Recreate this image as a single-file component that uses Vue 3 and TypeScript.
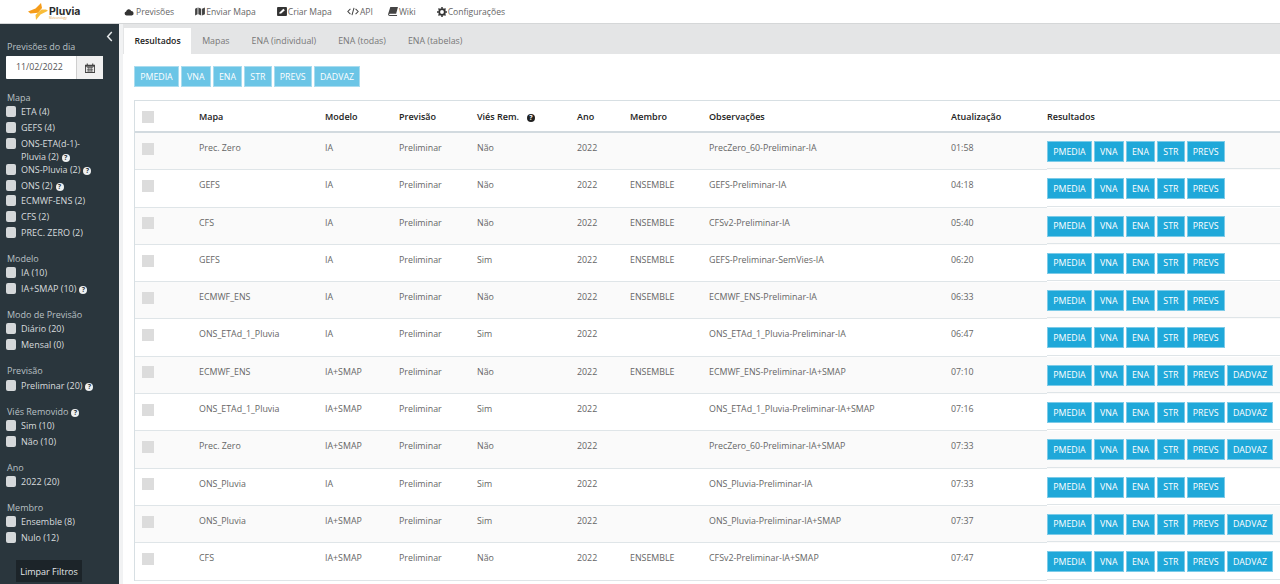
<script setup lang="ts">
interface Filter {
  label: string;
  help?: boolean;
}
interface Group {
  title: string;
  help?: boolean;
  filters: Filter[];
}
interface Row {
  mapa: string;
  modelo: string;
  previsao: string;
  vies: string;
  membro: string;
  obs: string;
  hora: string;
  dadvaz: boolean;
}

const menu = [
  { label: "Previsões", icon: "cloud", wide: true },
  { label: "Enviar Mapa", icon: "map", wide: true },
  { label: "Criar Mapa", icon: "edit", wide: false },
  { label: "API", icon: "code", wide: false },
  { label: "Wiki", icon: "book", wide: true },
  { label: "Configurações", icon: "cog", wide: false },
];

const tabs = ["Resultados", "Mapas", "ENA (individual)", "ENA (todas)", "ENA (tabelas)"];

const groups: Group[] = [
  {
    title: "Mapa",
    filters: [
      { label: "ETA (4)" },
      { label: "GEFS (4)" },
      { label: "ONS-ETA(d-1)-Pluvia (2)", help: true },
      { label: "ONS-Pluvia (2)", help: true },
      { label: "ONS (2)", help: true },
      { label: "ECMWF-ENS (2)" },
      { label: "CFS (2)" },
      { label: "PREC. ZERO (2)" },
    ],
  },
  { title: "Modelo", filters: [{ label: "IA (10)" }, { label: "IA+SMAP (10)", help: true }] },
  { title: "Modo de Previsão", filters: [{ label: "Diário (20)" }, { label: "Mensal (0)" }] },
  { title: "Previsão", filters: [{ label: "Preliminar (20)", help: true }] },
  { title: "Viés Removido", help: true, filters: [{ label: "Sim (10)" }, { label: "Não (10)" }] },
  { title: "Ano", filters: [{ label: "2022 (20)" }] },
  { title: "Membro", filters: [{ label: "Ensemble (8)" }, { label: "Nulo (12)" }] },
];

const columns = ["Mapa", "Modelo", "Previsão", "Viés Rem.", "Ano", "Membro", "Observações", "Atualização", "Resultados"];

const rows: Row[] = [
  { mapa: "Prec. Zero", modelo: "IA", previsao: "Preliminar", vies: "Não", membro: "", obs: "PrecZero_60-Preliminar-IA", hora: "01:58", dadvaz: false },
  { mapa: "GEFS", modelo: "IA", previsao: "Preliminar", vies: "Não", membro: "ENSEMBLE", obs: "GEFS-Preliminar-IA", hora: "04:18", dadvaz: false },
  { mapa: "CFS", modelo: "IA", previsao: "Preliminar", vies: "Não", membro: "ENSEMBLE", obs: "CFSv2-Preliminar-IA", hora: "05:40", dadvaz: false },
  { mapa: "GEFS", modelo: "IA", previsao: "Preliminar", vies: "Sim", membro: "ENSEMBLE", obs: "GEFS-Preliminar-SemVies-IA", hora: "06:20", dadvaz: false },
  { mapa: "ECMWF_ENS", modelo: "IA", previsao: "Preliminar", vies: "Não", membro: "ENSEMBLE", obs: "ECMWF_ENS-Preliminar-IA", hora: "06:33", dadvaz: false },
  { mapa: "ONS_ETAd_1_Pluvia", modelo: "IA", previsao: "Preliminar", vies: "Sim", membro: "", obs: "ONS_ETAd_1_Pluvia-Preliminar-IA", hora: "06:47", dadvaz: false },
  { mapa: "ECMWF_ENS", modelo: "IA+SMAP", previsao: "Preliminar", vies: "Não", membro: "ENSEMBLE", obs: "ECMWF_ENS-Preliminar-IA+SMAP", hora: "07:10", dadvaz: true },
  { mapa: "ONS_ETAd_1_Pluvia", modelo: "IA+SMAP", previsao: "Preliminar", vies: "Sim", membro: "", obs: "ONS_ETAd_1_Pluvia-Preliminar-IA+SMAP", hora: "07:16", dadvaz: true },
  { mapa: "Prec. Zero", modelo: "IA+SMAP", previsao: "Preliminar", vies: "Não", membro: "", obs: "PrecZero_60-Preliminar-IA+SMAP", hora: "07:33", dadvaz: true },
  { mapa: "ONS_Pluvia", modelo: "IA", previsao: "Preliminar", vies: "Sim", membro: "", obs: "ONS_Pluvia-Preliminar-IA", hora: "07:33", dadvaz: false },
  { mapa: "ONS_Pluvia", modelo: "IA+SMAP", previsao: "Preliminar", vies: "Sim", membro: "", obs: "ONS_Pluvia-Preliminar-IA+SMAP", hora: "07:37", dadvaz: true },
  { mapa: "CFS", modelo: "IA+SMAP", previsao: "Preliminar", vies: "Não", membro: "ENSEMBLE", obs: "CFSv2-Preliminar-IA+SMAP", hora: "07:47", dadvaz: true },
];

const baseButtons = ["PMEDIA", "VNA", "ENA", "STR", "PREVS"];
const allButtons = [...baseButtons, "DADVAZ"];
</script>

<template>
  <div class="page">
    <header class="topbar">
      <div class="logo">
        <svg class="logo-mark" viewBox="0 0 20 17" width="20" height="17">
          <path d="M0 8.5 L7.5 5.5 L13 0 L14 5 L10 9.8 L2.5 10.5 Z" fill="#f59c1a" />
          <path d="M20 7.8 L12.5 11.5 L8 17 L7.5 12 L10.5 9 L13.5 6.6 L18 6.6 Z" fill="#f8bd3a" />
        </svg>
        <div class="logo-text">
          <span class="logo-name">Pluvia</span>
          <span class="logo-sub">Meteorology</span>
        </div>
      </div>
      <nav class="menu">
        <a v-for="item in menu" :key="item.label" class="menu-item" :class="{ wide: item.wide }">
          <svg v-if="item.icon === 'cloud'" class="cloud" viewBox="0 0 12 10" width="10" height="8">
            <path d="M3 9.5 A2.6 2.6 0 0 1 2.4 4.4 A3.4 3.4 0 0 1 8.8 3.6 A3 3 0 0 1 9.5 9.5 Z" fill="#333" />
          </svg>
          <svg v-else-if="item.icon === 'map'" viewBox="0 0 12 11" width="10" height="9">
            <path d="M0 2 L3 .5 V9 L0 10.5 Z M4 .5 L7.5 2 V10.5 L4 9 Z M8.5 2 L12 .5 V9 L8.5 10.5 Z" fill="#444" />
          </svg>
          <svg v-else-if="item.icon === 'edit'" viewBox="0 0 11 10" width="10" height="9">
            <path d="M1 0 H10 A1 1 0 0 1 11 1 V9 A1 1 0 0 1 10 10 H1 A1 1 0 0 1 0 9 V1 A1 1 0 0 1 1 0 Z" fill="#333" />
            <path d="M2.5 7.6 L3 5.8 L7 1.9 L8.7 3.5 L4.6 7.3 Z" fill="#fff" />
          </svg>
          <svg v-else-if="item.icon === 'code'" viewBox="0 0 14 10" width="12" height="9">
            <path d="M4 2 L1 5 L4 8 M10 2 L13 5 L10 8 M8.2 .8 L5.8 9.2" fill="none" stroke="#444" stroke-width="1.2" />
          </svg>
          <svg v-else-if="item.icon === 'book'" viewBox="0 0 11 10" width="10" height="9">
            <path d="M2.5 0 H11 L9 7.5 H2 Q1 7.5 1.2 8.4 Q1.4 9 2.2 9 H10 V10 H2 Q0 10 0 8 Z" fill="#444" />
          </svg>
          <svg v-else viewBox="0 0 12 12" width="10" height="10">
            <circle cx="6" cy="6" r="3.4" fill="none" stroke="#333" stroke-width="2.2" />
            <path d="M6 0 V2 M6 10 V12 M0 6 H2 M10 6 H12 M1.8 1.8 L3.2 3.2 M8.8 8.8 L10.2 10.2 M1.8 10.2 L3.2 8.8 M8.8 3.2 L10.2 1.8" stroke="#333" stroke-width="1.8" />
          </svg>
          <span>{{ item.label }}</span>
        </a>
      </nav>
    </header>

    <div class="body">
      <aside class="sidebar">
        <svg class="collapse" viewBox="0 0 7 12" width="7" height="11">
          <path d="M6 1 L1.5 6 L6 11" fill="none" stroke="#e6e9ea" stroke-width="1.6" />
        </svg>
        <h4 class="date-title">Previsões do dia</h4>
        <div class="date">
          <span class="date-value">11/02/2022</span>
          <span class="date-btn">
            <svg viewBox="0 0 11 11" width="10" height="10">
              <path d="M0 2 H11 V11 H0 Z M1 4 V10 H10 V4 Z" fill="#444" fill-rule="evenodd" />
              <path d="M2.5 .5 V2.5 M8.5 .5 V2.5" stroke="#444" stroke-width="1.2" />
              <path d="M2 5 H9 M2 7 H9 M2 8.8 H9 M3.7 4.5 V9.5 M5.5 4.5 V9.5 M7.3 4.5 V9.5" stroke="#444" stroke-width=".7" />
            </svg>
          </span>
        </div>
        <section v-for="group in groups" :key="group.title" class="group">
          <h4 class="group-title">{{ group.title }}<span v-if="group.help" class="help">?</span></h4>
          <label v-for="filter in group.filters" :key="filter.label" class="filter">
            <span class="check"></span>
            <span class="filter-label">{{ filter.label }}<span v-if="filter.help" class="help">?</span></span>
          </label>
        </section>
        <button class="clear">Limpar Filtros</button>
      </aside>

      <main class="content">
        <div class="tabs">
          <a v-for="(tab, i) in tabs" :key="tab" class="tab" :class="{ active: i === 0 }">{{ tab }}</a>
        </div>
        <div class="panel">
          <div class="bulk">
            <button v-for="b in allButtons" :key="b" class="btn">{{ b }}</button>
          </div>
          <table class="results">
            <colgroup>
              <col style="width: 64px" />
              <col style="width: 126px" />
              <col style="width: 74px" />
              <col style="width: 78px" />
              <col style="width: 100px" />
              <col style="width: 53px" />
              <col style="width: 79px" />
              <col style="width: 242px" />
              <col style="width: 96px" />
              <col style="width: 240px" />
            </colgroup>
            <thead>
              <tr>
                <th><span class="box"></span></th>
                <th v-for="c in columns" :key="c">
                  {{ c }}<span v-if="c === 'Viés Rem.'" class="help dark">?</span>
                </th>
              </tr>
            </thead>
            <tbody>
              <tr v-for="(r, i) in rows" :key="i">
                <td><span class="box"></span></td>
                <td>{{ r.mapa }}</td>
                <td>{{ r.modelo }}</td>
                <td>{{ r.previsao }}</td>
                <td>{{ r.vies }}</td>
                <td>2022</td>
                <td>{{ r.membro }}</td>
                <td>{{ r.obs }}</td>
                <td>{{ r.hora }}</td>
                <td class="actions">
                  <button v-for="b in r.dadvaz ? allButtons : baseButtons" :key="b" class="btn solid">{{ b }}</button>
                </td>
              </tr>
            </tbody>
          </table>
        </div>
      </main>
    </div>
  </div>
</template>

<style>
html,
body {
  margin: 0;
  height: 100%;
  overflow: hidden;
  background: #fff;
}
</style>

<style scoped>
.page {
  display: flex;
  flex-direction: column;
  width: 1280px;
  height: 584px;
  overflow: hidden;
  font-family: "Open Sans", "Noto Sans", sans-serif;
  font-size: 9px;
  color: #555;
}

.topbar {
  display: flex;
  flex: none;
  align-items: center;
  height: 23px;
  background: #fff;
  border-bottom: 1px solid #d5d7d8;
}
.logo {
  display: flex;
  align-items: center;
  width: 124px;
  padding-left: 28px;
  box-sizing: border-box;
  gap: 1px;
}
.logo-text {
  display: flex;
  flex-direction: column;
  margin-top: 4px;
  line-height: 1;
}
.logo-name {
  font-family: "Inter", sans-serif;
  font-size: 10.5px;
  font-weight: 700;
  color: #2b2b2b;
}
.logo-sub {
  font-size: 3px;
  color: #e8a33a;
}
.menu {
  display: flex;
  align-items: center;
  gap: 15px;
  font-size: 8.6px;
  color: #666;
}
.menu-item {
  display: flex;
  align-items: center;
  gap: 1px;
}
.menu-item.wide {
  margin-right: 6px;
}
.cloud {
  margin-right: 1px;
}

.body {
  display: flex;
  flex: 1;
  min-height: 0;
}

.sidebar {
  position: relative;
  flex: none;
  width: 119px;
  padding: 17px 0 0 6px;
  box-sizing: border-box;
  background: #2a363d;
  color: #d8dcde;
}
.collapse {
  position: absolute;
  top: 7px;
  right: 6px;
}
h4 {
  margin: 0 0 0 1px;
  font-size: 9px;
  font-weight: 400;
  line-height: 12px;
  color: #b9c0c4;
}
.date-title {
  margin-bottom: 3px;
}
.date {
  display: flex;
  width: 97px;
  height: 23px;
  background: #fff;
  border-radius: 1px;
  margin-bottom: 13px;
  color: #555;
  font-size: 8.8px;
}
.date-value {
  flex: 1;
  padding-left: 10px;
  line-height: 23px;
}
.date-btn {
  display: flex;
  align-items: center;
  justify-content: center;
  width: 26px;
  background: #f0f0f0;
  border-left: 1px solid #cfcfcf;
}
.group {
  margin-bottom: 11.2px;
}
.group-title {
  margin-bottom: 1.3px;
}
.filter {
  display: flex;
  align-items: flex-start;
  gap: 5px;
  min-height: 15.8px;
  line-height: 13px;
}
.check {
  flex: none;
  width: 10px;
  height: 11px;
  margin-top: 1px;
  background: #d5d8da;
  border-radius: 2px;
}
.filter-label {
  width: 80px;
}
.help {
  display: inline-block;
  width: 8px;
  height: 8px;
  margin-left: 3px;
  border-radius: 50%;
  background: #eef0f1;
  color: #2a363d;
  font-size: 7px;
  font-weight: 700;
  line-height: 8px;
  text-align: center;
  vertical-align: 0;
}
.help.dark {
  margin-left: 8px;
  background: #222;
  color: #fff;
}
.clear {
  position: absolute;
  left: 16px;
  bottom: 2px;
  height: 22px;
  width: 66px;
  padding: 0;
  border: 0;
  background: #1c2429;
  color: #e3e6e8;
  font: inherit;
}

.content {
  flex: 1;
  min-width: 0;
  border-left: 4px solid #f1f2f3;
  display: flex;
  flex-direction: column;
}
.tabs {
  display: flex;
  flex: none;
  height: 30px;
  padding-left: 1px;
  box-sizing: border-box;
  background: #e4e5e6;
  font-size: 8.85px;
}
.tab {
  margin-top: 4px;
  padding: 0 11px;
  line-height: 26px;
  color: #777;
}
.tab.active {
  padding: 0 10.5px;
  background: #fff;
  color: #222;
  font-size: 8.7px;
  font-weight: 600;
}
.panel {
  flex: 1;
  padding: 12px 0 0 11px;
  background: #fff;
}
.bulk {
  display: flex;
  gap: 2px;
  margin-bottom: 13px;
}
.btn {
  height: 21px;
  padding: 0 5.2px;
  border: 1px solid #a9dcef;
  background: #6bc5e6;
  color: #fff;
  font: inherit;
  font-size: 8.8px;
  white-space: nowrap;
}
.btn.solid {
  background: #1fa8d9;
  border-color: #7ccbe8;
}
.results {
  width: 1153px;
  table-layout: fixed;
  border-collapse: separate;
  border-spacing: 0;
  border-top: 1px solid #d7dfe3;
  border-left: 1px solid #d7dfe3;
  font-size: 8.85px;
  color: #666;
}
.results th {
  height: 29px;
  padding: 1px 0 0;
  border-bottom: 2px solid #d2dadf;
  font-size: 9px;
  font-weight: 600;
  text-align: left;
  color: #222;
}
.results td {
  height: 36.3px;
  padding: 0;
  border-bottom: 1px solid #dfe5e8;
  vertical-align: top;
  line-height: 31px;
}
.results tbody tr:nth-child(odd) {
  background: #fafafa;
}
.results th:first-child,
.results td:first-child {
  padding-left: 7px;
}
.box {
  display: inline-block;
  width: 12px;
  height: 12px;
  background: #dcdcdc;
  vertical-align: middle;
}
.results td.actions {
  display: flex;
  gap: 2px;
  padding-top: 8px;
  line-height: normal;
  box-sizing: border-box;
}
</style>
